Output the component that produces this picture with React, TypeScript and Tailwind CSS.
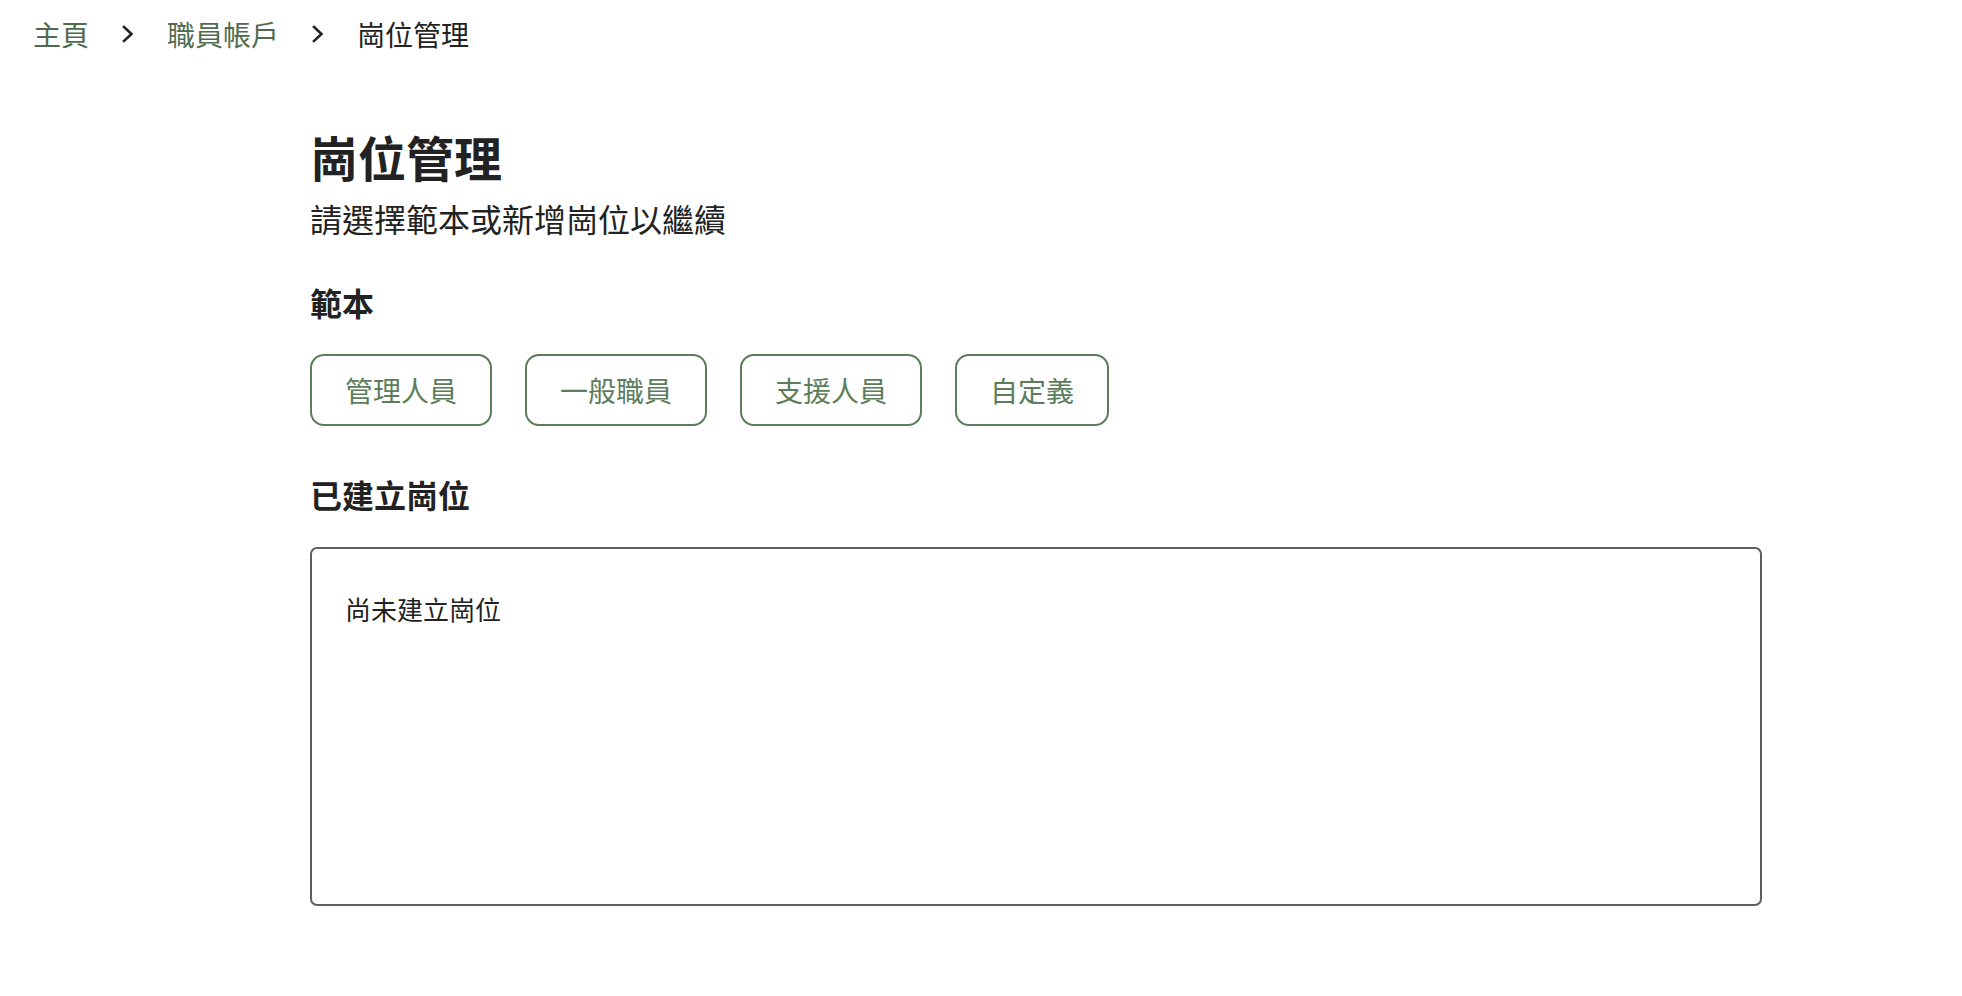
const font = "font-['Noto_Sans_CJK_TC','Noto_Sans_CJK_SC',sans-serif]";

const templates = ['管理人員', '一般職員', '支援人員', '自定義'];

function Chevron() {
  return (
    <svg width="12" height="18" viewBox="0 0 12 18" fill="none" className="shrink-0">
      <path d="M2 2l7.5 7-7.5 7" stroke="#222" strokeWidth="2.6" strokeLinecap="square" />
    </svg>
  );
}

export default function App() {
  return (
    <div className={`min-h-screen bg-white text-[#222] ${font}`}>
      {/* Breadcrumb */}
      <nav className="flex items-center gap-[33px] pl-[33px] pt-[14px] text-[28px] leading-[40px]">
        <a className="text-[#4f6b4f]">主頁</a>
        <Chevron />
        <a className="text-[#4f6b4f]">職員帳戶</a>
        <Chevron />
        <span className="text-[#222]">崗位管理</span>
      </nav>

      <main className="ml-[310px] w-[1452px] pt-[72px]">
        <h1 className="text-[48px] font-bold leading-[60px]">崗位管理</h1>
        <p className="mt-[10px] text-[32px] leading-[44px]">請選擇範本或新增崗位以繼續</p>

        <h2 className="mt-[40px] text-[32px] font-bold leading-[44px]">範本</h2>
        <div className="mt-[30px] flex gap-[33px]">
          {templates.map((t) => (
            <button
              key={t}
              className="h-[72px] rounded-[14px] border-2 border-[#5b7d5b] px-[33px] text-[28px] text-[#5b7d5b]"
            >
              {t}
            </button>
          ))}
        </div>

        <h2 className="mt-[46px] text-[32px] font-bold leading-[44px]">已建立崗位</h2>
        <div className="mt-[31px] h-[359px] rounded-[7px] border-2 border-[#5f5f5f] px-[33px] pt-[42px]">
          <p className="text-[26px] leading-[36px]">尚未建立崗位</p>
        </div>
      </main>
    </div>
  );
}
